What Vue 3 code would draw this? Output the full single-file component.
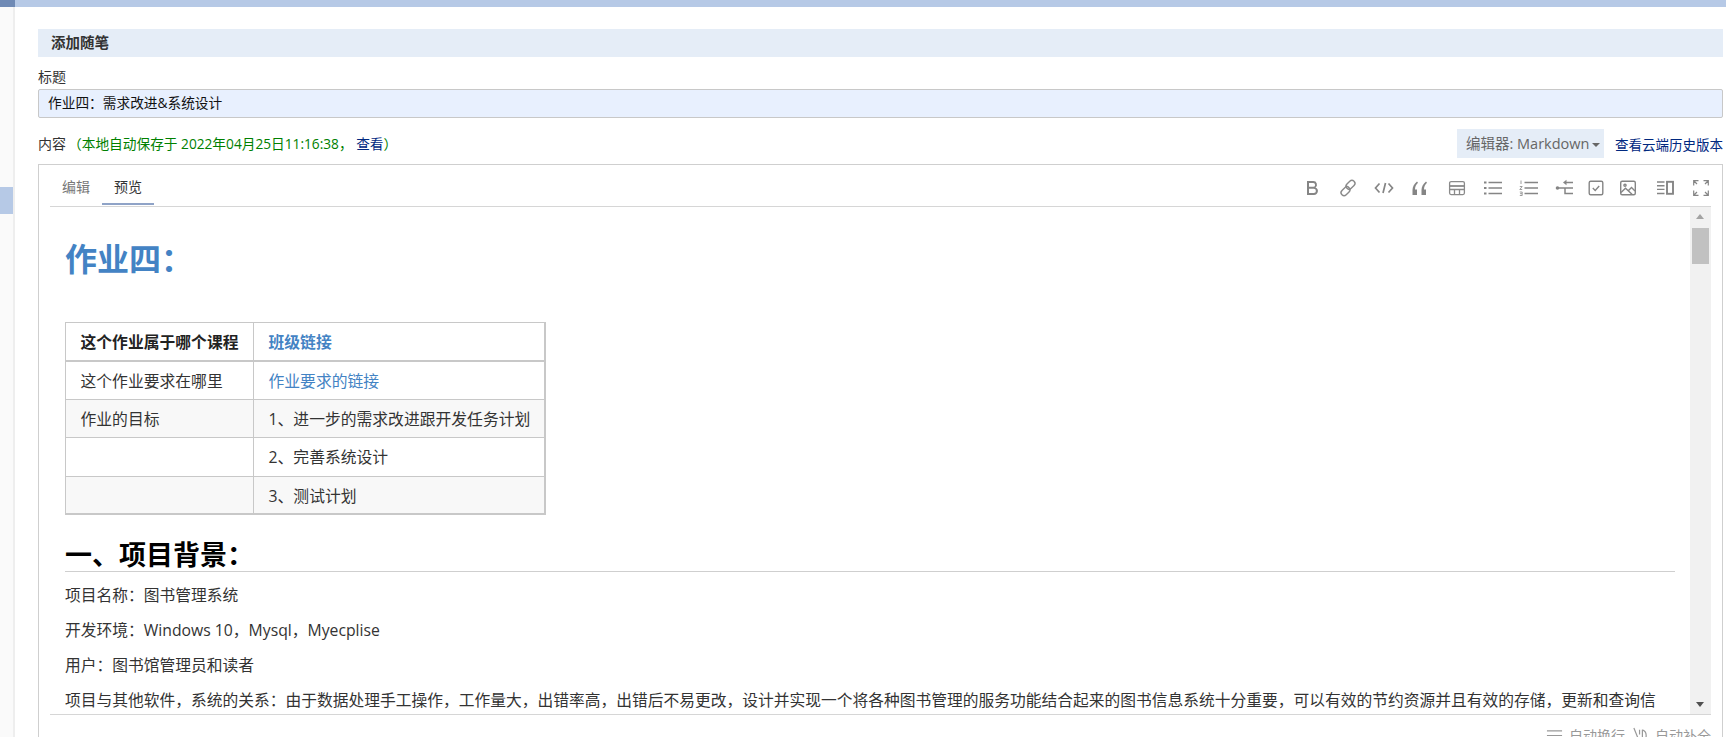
<script setup>
const rows = [
  { a: '这个作业要求在哪里', b: '作业要求的链接', link: true },
  { a: '作业的目标', b: '1、进一步的需求改进跟开发任务计划' },
  { a: '', b: '2、完善系统设计' },
  { a: '', b: '3、测试计划' },
]
</script>

<template>
  <div class="page">
    <aside class="side">
      <div class="side-top"></div>
      <div class="side-mark"></div>
    </aside>
    <div class="main">
      <div class="topbar"></div>
      <div class="form">
        <h2 class="title">添加随笔</h2>
        <label class="label">标题</label>
        <div class="input">作业四：需求改进&amp;系统设计</div>
        <div class="content-row">
          <div class="content-label">
            内容<span class="saved">（本地自动保存于 2022年04月25日11:16:38， <a class="dark-link">查看</a>）</span>
          </div>
          <div class="content-right">
            <div class="picker">编辑器: Markdown<i class="caret"></i></div>
            <a class="history">查看云端历史版本</a>
          </div>
        </div>
        <div class="editor">
          <div class="editor-head">
            <div class="tabs">
              <span class="tab">编辑</span>
              <span class="tab active">预览</span>
            </div>
            <div class="tools">
              <svg class="tool" viewBox="0 0 20 20"><path d="M5 3h6.300a3.600 3.600 0 0 1 2.200 6.500A3.900 3.900 0 0 1 12 17H5zM7 5v3.800h4.200a1.900 1.900 0 0 0 0-3.800zM7 10.800V15h4.800a2.100 2.100 0 0 0 0-4.200z" fill-rule="evenodd" fill="#858585"/></svg>
              <svg class="tool" viewBox="0 0 20 20" fill="none" stroke="#8a8a8a" stroke-width="1.400"><rect x="9.500" y="1.800" width="6" height="10" rx="3" transform="rotate(45 12.500 6.800)"/><rect x="4.500" y="8.200" width="6" height="10" rx="3" transform="rotate(45 7.500 13.200)"/></svg>
              <svg class="tool" viewBox="0 0 20 20" fill="none" stroke="#858585" stroke-width="1.700"><path d="M5.500 5.500L1.500 10l4 4.500M14.500 5.500l4 4.500-4 4.500M11.500 5l-2.500 10"/></svg>
              <svg class="tool" viewBox="0 0 20 20" fill="#858585"><path d="M2.500 17h4.500v-5.500H5c0-2.700 1-4.800 3-6.700L7 3.500C4 6 2.500 8.800 2.500 12zM11.500 17H16v-5.500h-2c0-2.700 1-4.800 3-6.700L16 3.500C13 6 11.500 8.800 11.500 12z"/></svg>
              <svg class="tool tool-wide" viewBox="0 0 20 20" fill="none" stroke="#8a8a8a" stroke-width="1.300"><rect x="2.600" y="3.600" width="14.800" height="13" rx="1.500"/><path d="M2.600 8h14.800" stroke-width="1.800"/><path d="M2.600 11.500h14.800M7.500 11.500v5M12.500 11.500v5"/></svg>
              <svg class="tool" viewBox="0 0 20 20" fill="none" stroke="#858585" stroke-width="1.600"><path d="M5.500 4.500H19M5.500 10H19M5.500 15.500H19"/><path d="M1 4.500h2.500M1 10h2.500M1 15.500h2.500" stroke-width="2.200"/></svg>
              <svg class="tool" viewBox="0 0 20 20" fill="none" stroke="#858585" stroke-width="1.600"><path d="M5.500 4.500H19M5.500 10H19M5.500 15.500H19"/><path d="M2 2.500v3.500M.8 8.500h2.400l-2.400 3h2.400M.8 14h2.400v3.500H.8M1 15.700h2" stroke-width=".8"/></svg>
              <svg class="tool" viewBox="0 0 20 20" fill="none" stroke="#858585" stroke-width="1.500"><circle cx="2.500" cy="10" r="1.800" fill="#858585" stroke="none"/><path d="M11 4.500h7M2 10h16M10 10v5.500h8"/><path d="M11.500 1.800L8 4.500l3.500 2.700z" fill="#858585" stroke="none"/></svg>
              <svg class="tool tool-tight" viewBox="0 0 20 20" fill="none" stroke="#858585" stroke-width="1.400"><rect x="3.200" y="3.200" width="13.600" height="13.600" rx="1.500"/><path d="M6.800 10l2.400 2.400 4-4.400"/></svg>
              <svg class="tool tool-tighter" viewBox="0 0 20 20" fill="none" stroke="#858585" stroke-width="1.400"><rect x="2.700" y="3.200" width="14.600" height="13.600" rx="1.500"/><path d="M3 14.500l4.500-4.300 6.500 6M10.500 12.500l3-3 3.500 3.500"/><circle cx="7" cy="7.200" r="1.100"/></svg>
              <svg class="tool tool-wide" viewBox="0 0 20 20" fill="none" stroke="#858585" stroke-width="1.400"><path d="M2 4h7.500M2 7.700h7.500M2 11.400h7.500M2 15.500h7.500"/><rect x="12" y="3.800" width="6" height="12" stroke-width="1.900"/></svg>
              <svg class="tool" viewBox="0 0 20 20" fill="none" stroke="#858585" stroke-width="1.200"><path d="M2.700 7.500V2.700H7.500M12.500 2.700h4.800v4.800M2.700 12.500v4.800h4.800M12.500 17.300h4.800v-4.800M3 3l3 3M17 3l-3 3M3 17l3-3M17 17l-3-3"/></svg>
            </div>
          </div>
          <div class="preview">
            <div class="doc">
              <h1 class="h1">作业四：</h1>
              <table class="tbl">
                <thead>
                  <tr><th>这个作业属于哪个课程</th><th><a class="blue">班级链接</a></th></tr>
                </thead>
                <tbody>
                  <tr v-for="(r, i) in rows" :key="i" :class="{ alt: i % 2 === 1 }">
                    <td>{{ r.a }}</td>
                    <td><a v-if="r.link" class="blue">{{ r.b }}</a><template v-else>{{ r.b }}</template></td>
                  </tr>
                </tbody>
              </table>
              <h2 class="h2">一、项目背景：</h2>
              <p>项目名称：图书管理系统</p>
              <p>开发环境：Windows 10，Mysql，Myecplise</p>
              <p>用户：图书馆管理员和读者</p>
              <p class="clip">项目与其他软件，系统的关系：由于数据处理手工操作，工作量大，出错率高，出错后不易更改，设计并实现一个将各种图书管理的服务功能结合起来的图书信息系统十分重要，可以有效的节约资源并且有效的存储，更新和查询信</p>
            </div>
            <div class="scrollbar">
              <i class="arrow up"></i>
              <div class="thumb"></div>
              <i class="arrow down"></i>
            </div>
          </div>
          <div class="editor-foot">
            <span class="foot-item">
              <svg class="foot-icon" viewBox="0 0 18 18" fill="none" stroke="#999" stroke-width="1.300"><path d="M1 4h16M1 9h16M1 14h16"/></svg>自动换行
            </span>
            <span class="foot-item">
              <svg class="foot-icon tall" viewBox="0 0 18 18" fill="none" stroke="#999" stroke-width="1.300"><path d="M2 1l6 15M8 3v5M11 3c3 1 4 3 4 6s-1 5-4 7M11 3v10"/></svg>自动补全
            </span>
          </div>
        </div>
      </div>
    </div>
  </div>
</template>

<style>
html, body { margin: 0; background: #fff; overflow: hidden; }
</style>

<style scoped>
.page { display: flex; width: 1726px; height: 737px; overflow: hidden; font-family: "Open Sans", "Noto Sans CJK SC", sans-serif; color: #333; background: #fff; }
.side { width: 13px; flex: none; background: #fafafa; border-right: 2px solid #eeeeee; }
.side-top { height: 7px; background: #6f8ab5; margin-right: -2px; }
.side-mark { height: 27px; margin-top: 180px; background: #b6c9e6; }
.main { flex: 1; min-width: 0; }
.topbar { height: 7px; background: #b6c9e6; }
.form { padding: 22px 3px 0 23px; }
.title { margin: 0; height: 28px; line-height: 27px; padding-left: 13px; background: #e5edf7; font-size: 14.5px; font-weight: 700; color: #333; }
.label { display: block; margin-top: 10px; margin-bottom: 2px; font-size: 14px; line-height: 20px; color: #333; }
.input { height: 27px; line-height: 25px; padding-left: 9px; border: 1px solid #c8c8c8; border-radius: 2px; background: #e8f0fe; font-size: 13.7px; color: #111; }
.content-row { display: flex; justify-content: space-between; align-items: center; height: 29px; margin-top: 11px; }
.content-label { font-size: 14px; line-height: 26px; color: #333; }
.saved { color: green; margin-left: 2px; font-size: 13.7px; }
.dark-link { color: #00287f; }
.content-right { display: flex; align-items: center; }
.picker { width: 147px; height: 29px; line-height: 29px; box-sizing: border-box; padding-left: 9px; background: #e5edf7; color: #666; font-size: 14.5px; white-space: nowrap; }
.caret { display: inline-block; margin-left: 3px; border: 4px solid transparent; border-top-color: #666; border-bottom: 0; vertical-align: 2px; }
.history { margin-left: 11px; color: #00287f; font-size: 13.5px; white-space: nowrap; }
.editor { margin-top: 6px; height: 600px; box-sizing: border-box; border: 1px solid #cfcfcf; padding: 0 11px 0 11px; }
.editor-head { display: flex; justify-content: space-between; height: 42px; border-bottom: 1px solid #d6d6d6; box-sizing: border-box; }
.tabs { display: flex; }
.tab { padding: 3px 12px 0; height: 40px; box-sizing: border-box; font-size: 14px; line-height: 38px; color: #777; }
.active { color: #333; border-bottom: 2px solid #8fa3c7; }
.tools { display: flex; align-items: center; box-sizing: border-box; padding-top: 5px; height: 41px; }
.tool { width: 20px; height: 20px; margin-left: 16px; }
.tool-tight { margin-left: 11px; }
.tool-tighter { margin-left: 12px; }
.tool-wide { margin-left: 17px; }
.preview { display: flex; height: 508px; overflow: hidden; border-bottom: 1px solid #d6d6d6; box-sizing: border-box; }
.doc { flex: 1; min-width: 0; padding: 0 15px; }
.h1 { margin: 30px 0 41px; font-size: 32px; line-height: 44px; font-weight: 700; color: #4383c4; }
.tbl { border-collapse: collapse; table-layout: fixed; width: 481px; border-style: solid; border-color: #c8c8c8; border-width: 1px 2px 2px 1px; font-size: 15.8px; color: #333; }
.tbl th, .tbl td { border: 1px solid #c8c8c8; padding: 0 14.5px; height: 38.4px; text-align: left; box-sizing: border-box; white-space: nowrap; }
.tbl th { font-weight: 700; color: #222; border-bottom-width: 2px; }
.tbl th:first-child, .tbl td:first-child { width: 188px; }
.tbl .alt td { background: #f8f8f8; }
.blue { color: #4383c4; }
.h2 { margin: 24px 0 11px; font-size: 27px; line-height: 32px; font-weight: 700; color: #000; border-bottom: 1px solid #cfcfcf; }
p { margin: 0 0 10px; font-size: 15.75px; line-height: 25px; color: #333; }
.clip { white-space: nowrap; overflow: hidden; }
.scrollbar { width: 21px; flex: none; position: relative; background: #f1f1f1; }
.thumb { margin: 21px 2px 0; height: 36px; background: #c1c1c1; }
.arrow { position: absolute; left: 6px; border: 4px solid transparent; }
.up { top: 7px; border-bottom: 5px solid #a3a3a3; border-top: 0; }
.down { bottom: 7px; border-top: 5px solid #505050; border-bottom: 0; }
.editor-foot { display: flex; justify-content: flex-end; gap: 7px; padding-top: 10px; font-size: 14px; color: #999; }
.foot-item { display: flex; align-items: center; gap: 6px; }
.foot-icon { width: 17px; height: 17px; }
</style>
